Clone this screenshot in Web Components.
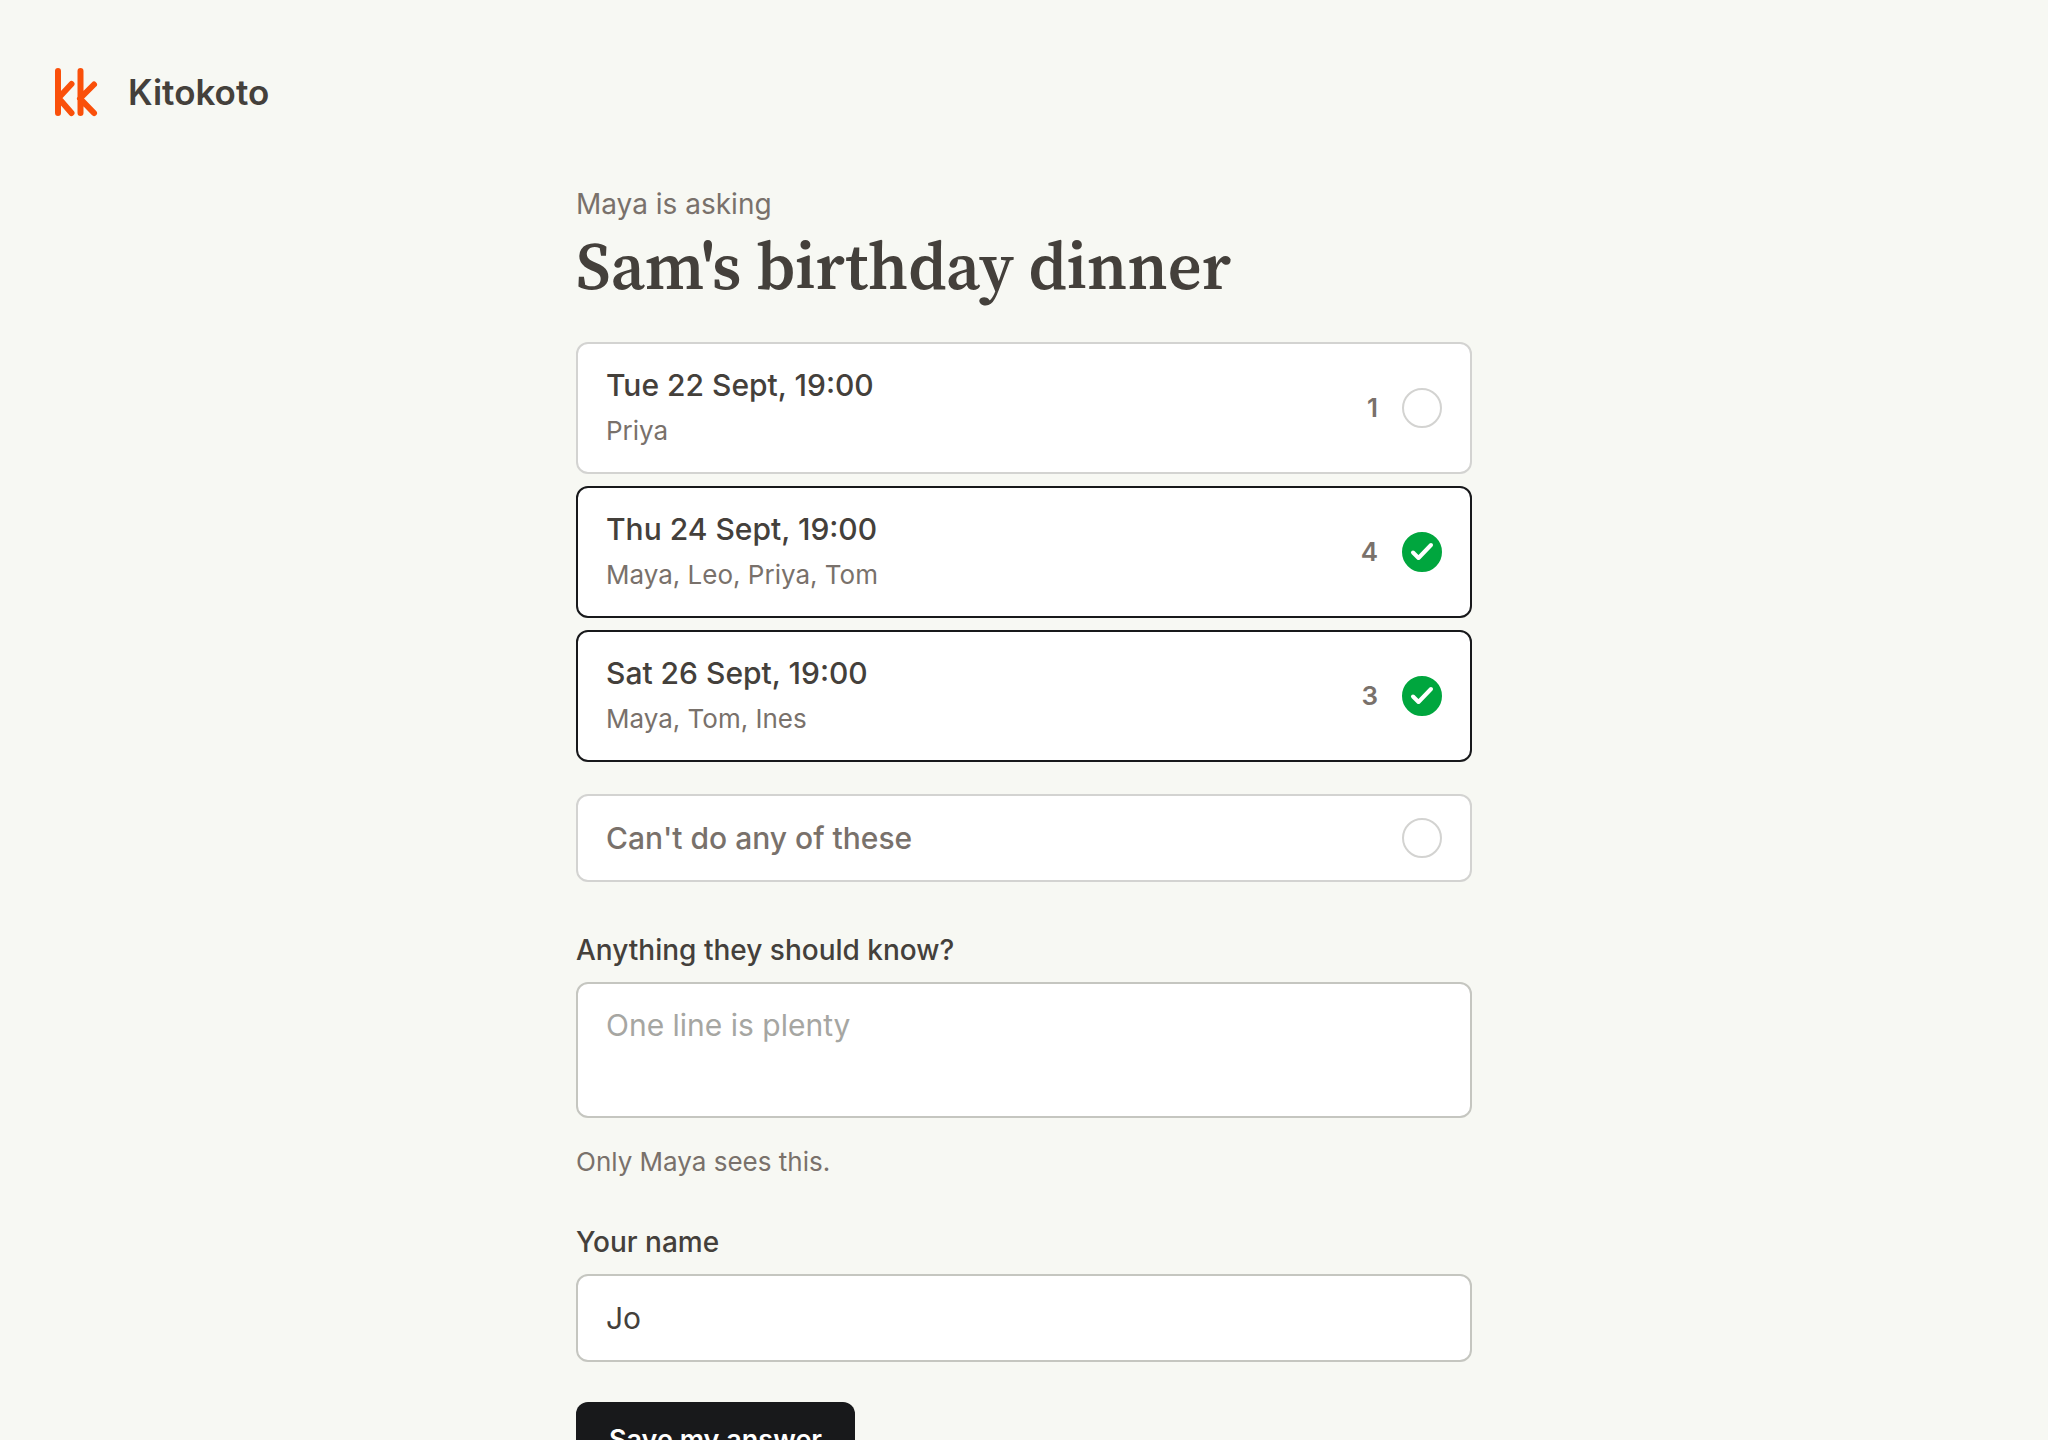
<!DOCTYPE html>
<html lang="en">
<head>
  <meta charset="UTF-8">
  <meta name="viewport" content="width=device-width, initial-scale=1.0">
  <title>Sam's birthday dinner | Kitokoto</title>
  <style>
    html {
      scrollbar-width: none;
    }

    body {
      margin: 0;
      background-color: #f7f8f3;
      color: #44403b;
      font-family: Inter, "Liberation Sans", sans-serif;
      font-size: 28px;
      line-height: 40px;
    }
  </style>
</head>
<body>
  <app-header></app-header>
  <poll-form></poll-form>

  <script>
    class AppHeader extends HTMLElement {

      constructor() {
        super();
        this.shadowDOM = this.attachShadow({ mode: 'open' });
      }

      connectedCallback() {
        this.render();
      }

      render() {
        this.shadowDOM.innerHTML = `
          <style>
          :host {
            display: block;
            padding: 64px 52px 0;
          }

          header {
            display: flex;
          }

          a {
            display: flex;
            align-items: center;
            gap: 28px;
            color: inherit;
            text-decoration: none;
            font-size: 35px;
            font-weight: 600;
          }

          svg {
            display: block;
            width: 48px;
            height: 56px;
            fill: none;
            stroke: #fa500a;
            stroke-width: 6;
            stroke-linecap: round;
            stroke-linejoin: round;
          }
          </style>

          <header>
            <a href="#">
              <svg viewBox="0 0 48 56" aria-hidden="true">
                <path d="M6 7V49M19.500 20L6.500 34L19.500 49" />
                <path d="M28.500 7V49M42 20.500L28 34.500L42 49" />
              </svg>
              <span>Kitokoto</span>
            </a>
          </header>
        `;
      }
    }

    customElements.define('app-header', AppHeader);

    // One answer row: title in the default slot, optional voters and count
    class PollOption extends HTMLElement {

      constructor() {
        super();
        this.shadowDOM = this.attachShadow({ mode: 'open' });
      }

      connectedCallback() {
        this.render();
      }

      render() {
        const voters = this.getAttribute('voters');
        const count = this.getAttribute('count');
        const checked = this.hasAttribute('checked') ? 'checked' : '';

        this.shadowDOM.innerHTML = `
          <style>
          :host {
            display: block;
          }

          label {
            display: flex;
            align-items: center;
            gap: 24px;
            box-sizing: border-box;
            min-height: 88px;
            padding: 20px 28px;
            border: 2px solid #d3d3d1;
            border-radius: 12px;
            background-color: white;
            line-height: 42px;
            cursor: pointer;
          }

          label:has(input:checked) {
            border-color: #18191b;
          }

          .text {
            flex: 1;
            display: flex;
            flex-direction: column;
            gap: 4px;
          }

          .title {
            font-size: 30px;
            font-weight: 500;
          }

          :host([muted]) .title {
            color: #79716b;
          }

          .voters,
          .count {
            color: #79716b;
            font-size: 26px;
          }

          .count {
            font-weight: 600;
          }

          .tick {
            display: grid;
            width: 40px;
            height: 40px;
          }

          .tick > * {
            grid-area: 1 / 1;
          }

          input {
            appearance: none;
            box-sizing: border-box;
            width: 40px;
            height: 40px;
            margin: 0;
            border: 2px solid #d3d3d1;
            border-radius: 50%;
            background-color: white;
          }

          input:checked {
            border-color: #00a63e;
            background-color: #00a63e;
          }

          svg {
            display: none;
            width: 40px;
            height: 40px;
            fill: none;
            stroke: white;
            stroke-width: 4;
            stroke-linecap: round;
            stroke-linejoin: round;
            pointer-events: none;
          }

          input:checked + svg {
            display: block;
          }
          </style>

          <label>
            <span class="text">
              <span class="title"><slot></slot></span>
              ${voters ? `<span class="voters">${voters}</span>` : ''}
            </span>
            ${count ? `<span class="count">${count}</span>` : ''}
            <span class="tick">
              <input type="checkbox" ${checked}>
              <svg viewBox="0 0 40 40" aria-hidden="true"><path d="M11 20.500L16.500 26L29 13" /></svg>
            </span>
          </label>
        `;
      }
    }

    customElements.define('poll-option', PollOption);

    class TextField extends HTMLElement {

      constructor() {
        super();
        this.shadowDOM = this.attachShadow({ mode: 'open' });
      }

      connectedCallback() {
        this.render();
      }

      render() {
        const label = this.getAttribute('label');
        const value = this.getAttribute('value') || '';
        const placeholder = this.getAttribute('placeholder') || '';
        const hint = this.getAttribute('hint');
        const control = this.hasAttribute('multiline')
          ? `<textarea id="field" rows="2" placeholder="${placeholder}">${value}</textarea>`
          : `<input id="field" type="text" value="${value}" placeholder="${placeholder}">`;

        this.shadowDOM.innerHTML = `
          <style>
          :host {
            display: flex;
            flex-direction: column;
          }

          label {
            margin-bottom: 12px;
            font-weight: 500;
          }

          input,
          textarea {
            display: block;
            box-sizing: border-box;
            width: 100%;
            margin: 0;
            padding: 20px 28px;
            border: 2px solid #c5c6c0;
            border-radius: 12px;
            background-color: white;
            color: inherit;
            font-family: inherit;
            font-size: 30px;
            line-height: 42px;
          }

          input {
            height: 88px;
          }

          textarea {
            height: 136px;
            resize: none;
          }

          ::placeholder {
            color: #a6a6a2;
          }

          p {
            margin: 24px 0 0;
            color: #79716b;
            font-size: 26px;
          }
          </style>

          <label for="field">${label}</label>
          ${control}
          ${hint ? `<p>${hint}</p>` : ''}
        `;
      }
    }

    customElements.define('text-field', TextField);

    class PollForm extends HTMLElement {

      constructor() {
        super();
        this.shadowDOM = this.attachShadow({ mode: 'open' });
      }

      connectedCallback() {
        this.render();
      }

      render() {
        this.shadowDOM.innerHTML = `
          <style>
          :host {
            display: block;
            box-sizing: border-box;
            max-width: 960px;
            margin: 0 auto;
            padding: 64px 32px;
          }

          .asker {
            margin: 0;
            color: #79716b;
          }

          h1 {
            margin: 2px 0 36px;
            font-family: "Source Serif 4", "Source Serif Pro", "Noto Serif CJK SC", "Noto Serif", "Liberation Serif", serif;
            font-size: 66px;
            font-weight: 600;
            line-height: 80px;
          }

          form {
            display: flex;
            flex-direction: column;
            gap: 40px;
          }

          .options {
            display: flex;
            flex-direction: column;
            gap: 12px;
            margin-bottom: 8px;
          }

          .none {
            margin-top: 20px;
          }

          button {
            align-self: flex-start;
            padding: 18px 33px;
            border: 0;
            border-radius: 12px;
            background-color: #18191b;
            color: white;
            font-family: inherit;
            font-size: 27px;
            font-weight: 600;
            line-height: 40px;
            cursor: pointer;
          }
          </style>

          <main>
            <p class="asker">Maya is asking</p>
            <h1>Sam's birthday dinner</h1>
            <form>
              <div class="options">
                <poll-option voters="Priya" count="1">Tue 22 Sept, 19:00</poll-option>
                <poll-option voters="Maya, Leo, Priya, Tom" count="4" checked>Thu 24 Sept, 19:00</poll-option>
                <poll-option voters="Maya, Tom, Ines" count="3" checked>Sat 26 Sept, 19:00</poll-option>
                <poll-option class="none" muted>Can't do any of these</poll-option>
              </div>
              <text-field label="Anything they should know?" placeholder="One line is plenty" hint="Only Maya sees this." multiline></text-field>
              <text-field label="Your name" value="Jo"></text-field>
              <button type="submit">Save my answer</button>
            </form>
          </main>
        `;
      }
    }

    customElements.define('poll-form', PollForm);
  </script>
</body>
</html>
